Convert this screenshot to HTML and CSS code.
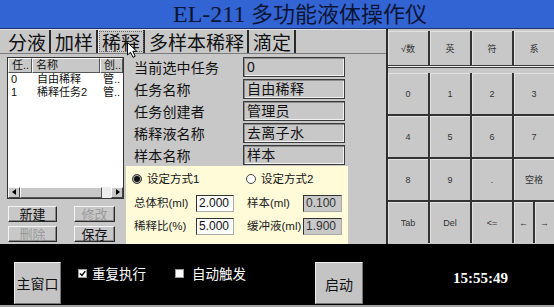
FILE: index.html
```html
<!DOCTYPE html>
<html>
<head>
<meta charset="utf-8">
<link rel="stylesheet" href="styles.css">
</head>
<body>
<div class="screen">
  <header class="title"><span class="latin">EL-211</span> 多功能液体操作仪</header>
  <div class="main">
    <section class="work">
      <nav class="tabs">
        <span class="tab first">分液</span><span class="tab">加样</span><span class="tab active">稀释</span><span class="tab">多样本稀释</span><span class="tab">滴定</span>
        <svg class="cursor" width="11" height="16" viewBox="0 0 11 16"><path d="M0.5 0.5 L0.5 13 L3.5 10.2 L6 15.3 L8.2 14.3 L5.8 9.3 L9.8 9.3 Z" fill="#fff" stroke="#000" stroke-width="1"/></svg>
      </nav>
      <div class="page">
        <div class="listcol">
          <div class="listbox">
            <div class="lhead"><span class="c1">任..</span><span class="c2">名称</span><span class="c3">创..</span></div>
            <div class="lrow"><span class="c1">0</span><span class="c2">自由稀释</span><span class="c3">管..</span></div>
            <div class="lrow"><span class="c1">1</span><span class="c2">稀释任务2</span><span class="c3">管..</span></div>
            <div class="lfill"></div>
            <div class="hscroll"><span class="arrow left"></span><span class="thumb"></span><span class="track"></span><span class="arrow right"></span></div>
          </div>
          <div class="btns">
            <span class="btn">新建</span><span class="btn off">修改</span>
            <span class="btn off">删除</span><span class="btn">保存</span>
          </div>
        </div>
        <div class="formcol">
          <div class="fields">
            <div class="frow"><span class="flabel">当前选中任务</span><span class="fbox">0</span></div>
            <div class="frow"><span class="flabel">任务名称</span><span class="fbox">自由稀释</span></div>
            <div class="frow"><span class="flabel">任务创建者</span><span class="fbox">管理员</span></div>
            <div class="frow"><span class="flabel">稀释液名称</span><span class="fbox">去离子水</span></div>
            <div class="frow"><span class="flabel">样本名称</span><span class="fbox">样本</span></div>
          </div>
          <div class="ypanel">
            <div class="yrow radios">
              <span class="radio r1"><span class="rdot on"></span>设定方式1</span>
              <span class="radio r2"><span class="rdot"></span>设定方式2</span>
            </div>
            <div class="yrow data">
              <span class="ylabel">总体积(ml)</span><span class="ibox">2.000</span>
              <span class="ylabel second">样本(ml)</span><span class="ibox ro">0.100</span>
            </div>
            <div class="yrow data gap2">
              <span class="ylabel">稀释比(%)</span><span class="ibox">5.000</span>
              <span class="ylabel second">缓冲液(ml)</span><span class="ibox ro">1.900</span>
            </div>
          </div>
        </div>
      </div>
    </section>
    <aside class="keypad">
      <div class="ktop">
        <span class="key">√数</span><span class="key">英</span><span class="key">符</span><span class="key">系</span>
      </div>
      <div class="ksep"></div>
      <div class="kgrid">
        <span class="key">0</span><span class="key">1</span><span class="key">2</span><span class="key">3</span>
        <span class="key">4</span><span class="key">5</span><span class="key">6</span><span class="key">7</span>
        <span class="key">8</span><span class="key">9</span><span class="key">.</span><span class="key">空格</span>
        <span class="key">Tab</span><span class="key">Del</span><span class="key">&lt;=</span>
        <span class="ksplit"><span class="key">←</span><span class="key">→</span></span>
      </div>
    </aside>
  </div>
  <footer class="bar">
    <span class="bigbtn home">主窗口</span>
    <span class="chk c-a"><span class="cbox"><svg width="7" height="7" viewBox="0 0 7 7"><path d="M1 3.5 L3 5.5 L6.2 1.2" fill="none" stroke="#000" stroke-width="1.4"/></svg></span>重复执行</span>
    <span class="chk c-b"><span class="cbox"></span>自动触发</span>
    <span class="bigbtn start">启动</span>
    <span class="clock">15:55:49</span>
  </footer>
</div>
</body>
</html>
```
FILE: styles.css
```css
html, body {
  margin: 0;
  padding: 0;
}
body {
  background: #c8c8c8;
  font-family: "Liberation Sans", "Noto Sans CJK SC", sans-serif;
  color: #111;
}
.screen {
  width: 554px;
  height: 307px;
  display: flex;
  flex-direction: column;
  overflow: hidden;
  background: #c8c8c8;
}
.title {
  height: 29px;
  box-sizing: border-box;
  border-bottom: 1px solid #1e3470;
  background: #3364d3;
  color: #0b1433;
  font-family: "Liberation Serif", "Noto Sans CJK SC", serif;
  font-size: 22px;
  line-height: 28px;
  padding-left: 173px;
  white-space: nowrap;
}
.title .latin {
  font-size: 24px;
}
.main {
  display: flex;
  height: 215px;
}
.work {
  width: 386px;
  display: flex;
  flex-direction: column;
}
.tabs {
  height: 24px;
  display: flex;
  position: relative;
  font-family: "Noto Sans CJK SC", sans-serif;
  font-size: 19px;
  line-height: 24px;
  border-top: 1px solid #e4e4e4;
  box-sizing: border-box;
}
.tab {
  padding: 0 3px 0 4px;
  border-right: 2px solid #2a2a2a;
  color: #111;
  white-space: nowrap;
}
.tab.first {
  padding-left: 8px;
}
.tab.active {
  outline: 1px dotted #666;
  outline-offset: -2px;
  box-shadow: inset 1px 0 0 #f2f2f2;
}
.cursor {
  position: absolute;
  left: 127px;
  top: 12px;
}
.page {
  flex: 1;
  border-top: 1px solid #7c7c7c;
  display: flex;
  padding-top: 3px;
}
.listcol {
  margin-left: 7px;
  width: 117px;
  display: flex;
  flex-direction: column;
}
.listbox {
  height: 142px;
  box-sizing: border-box;
  border: 1px solid #333;
  background: #fff;
  display: flex;
  flex-direction: column;
  font-family: "Liberation Sans", "Noto Sans CJK SC", sans-serif;
  font-size: 11px;
}
.lhead, .lrow {
  display: flex;
  white-space: nowrap;
}
.lhead {
  height: 15px;
  line-height: 13px;
}
.lhead span {
  box-sizing: border-box;
  border: 1px solid;
  border-color: #fff #555 #555 #fff;
  background: #c8c8c8;
  padding-left: 3px;
  overflow: hidden;
}
.lrow {
  height: 13px;
  line-height: 13px;
}
.lrow span {
  box-sizing: border-box;
  padding-left: 3px;
  overflow: hidden;
}
.c1 { width: 24px; }
.c2 { width: 68px; }
.c3 { width: 23px; }
.lrow .c2 { padding-left: 5px; }
.lfill {
  flex: 1;
}
.hscroll {
  height: 11px;
  display: flex;
}
.arrow {
  width: 12px;
  box-sizing: border-box;
  background: #c8c8c8;
  border: 1px solid;
  border-color: #fff #444 #444 #fff;
  position: relative;
}
.arrow::after {
  content: "";
  position: absolute;
  top: 1px;
  border-top: 3.5px solid transparent;
  border-bottom: 3.5px solid transparent;
}
.arrow.left::after {
  left: 3px;
  border-right: 4px solid #000;
}
.arrow.right::after {
  left: 4px;
  border-left: 4px solid #000;
}
.thumb {
  width: 82px;
  box-sizing: border-box;
  background: #c8c8c8;
  border: 1px solid;
  border-color: #fff #555 #555 #fff;
}
.track {
  flex: 1;
  background: #ededed;
}
.btns {
  margin-top: 7px;
  margin-left: 1px;
  display: grid;
  grid-template-columns: 49px 41px;
  grid-auto-rows: 16px;
  column-gap: 17px;
  row-gap: 4px;
}
.btn {
  box-sizing: border-box;
  border: 1px solid;
  border-color: #f4f4f4 #2a2a2a #2a2a2a #f4f4f4;
  box-shadow: inset -1px -1px 0 #888;
  font-family: "Noto Sans CJK SC", sans-serif;
  font-size: 13px;
  line-height: 14px;
  text-align: center;
  color: #111;
}
.btn.off {
  color: #9a9a9a;
}
.formcol {
  margin-left: 2px;
  width: 222px;
  display: flex;
  flex-direction: column;
}
.fields {
  display: flex;
  flex-direction: column;
  gap: 2px;
}
.frow {
  display: flex;
  height: 20px;
  align-items: center;
}
.flabel {
  width: 117px;
  box-sizing: border-box;
  padding-left: 8px;
  font-family: "Noto Sans CJK SC", sans-serif;
  font-size: 14px;
  letter-spacing: 0.2px;
  line-height: 20px;
  white-space: nowrap;
}
.fbox {
  width: 102px;
  height: 20px;
  box-sizing: border-box;
  border: 1px solid #3a3a3a;
  box-shadow: inset 1px 1px 0 #8c8c8c, inset -1px -1px 0 #f2f2f2;
  font-size: 14px;
  line-height: 18px;
  padding-left: 3px;
  letter-spacing: 0.3px;
  white-space: nowrap;
}
.ypanel {
  margin-top: 1px;
  flex: 1;
  background: #fffbd9;
  padding: 6px 0 0 6px;
  font-size: 12px;
}
.yrow {
  display: grid;
  grid-template-columns: 64px 38px 69px 39px;
  align-items: center;
  white-space: nowrap;
}
.radios {
  height: 14px;
}
.radio {
  display: flex;
  align-items: center;
  gap: 5px;
  font-size: 11.5px;
  line-height: 14px;
}
.r1 { grid-column: 1 / 3; }
.r2 { grid-column: 3 / 5; padding-left: 12px; }
.rdot {
  width: 10px;
  height: 10px;
  box-sizing: border-box;
  border-radius: 50%;
  border: 1px solid #444;
  background: #fff;
}
.rdot.on {
  background: #111;
  box-shadow: inset 0 0 0 1px #bbb;
}
.data {
  height: 17px;
  margin-top: 9px;
}
.data.gap2 {
  margin-top: 6px;
}
.ylabel {
  padding-left: 2px;
  font-size: 11.5px;
  line-height: 17px;
  color: #222;
  overflow: hidden;
}
.ylabel.second {
  padding-left: 13px;
}
.ibox {
  height: 17px;
  box-sizing: border-box;
  border: 1px solid;
  border-color: #333 #aaa #aaa #333;
  background: #fff;
  font-size: 12px;
  line-height: 15px;
  padding-left: 2px;
  color: #111;
}
.ibox.ro {
  background: #c8c8c8;
  color: #333;
}
.keypad {
  width: 166px;
  border-left: 2px solid #2e2e2e;
  display: flex;
  flex-direction: column;
}
.ktop {
  margin-top: 2px;
  height: 34px;
  display: grid;
  grid-template-columns: repeat(4, 40px);
  column-gap: 2px;
  background: #333;
}
.ksep {
  height: 8px;
  background: linear-gradient(#3a3a3a 0 1px, #efefef 1px 2px, #3a3a3a 2px 3px, #c8c8c8 3px);
}
.kgrid {
  height: 170px;
  display: grid;
  grid-template-columns: repeat(4, 40px);
  grid-template-rows: repeat(4, 41px);
  gap: 2px;
  background: #333;
}
.key {
  background: #c8c8c8;
  box-shadow: inset 1px 1px 0 #e2e2e2;
  display: flex;
  align-items: center;
  justify-content: center;
  font-family: "Liberation Sans", "Noto Sans CJK SC", sans-serif;
  font-size: 9px;
  color: #333;
}
.ksplit {
  display: flex;
  gap: 2px;
  background: #333;
}
.ksplit .key {
  flex: 1;
}
.bar {
  height: 61px;
  background: #000;
  border-bottom: 2px solid #a4a4a4;
  display: flex;
  align-items: flex-start;
}
.bigbtn {
  margin-top: 18px;
  height: 42px;
  box-sizing: border-box;
  background: #c4c4c4;
  border: 1px solid;
  border-color: #eee #777 #777 #eee;
  display: flex;
  align-items: center;
  justify-content: center;
  font-family: "Noto Sans CJK SC", sans-serif;
  font-size: 14px;
  color: #111;
}
.home {
  margin-left: 14px;
  width: 47px;
}
.start {
  width: 48px;
  padding-top: 2px;
}
.chk {
  margin-top: 22px;
  display: flex;
  align-items: center;
  gap: 5px;
  color: #fff;
  font-family: "Noto Sans CJK SC", sans-serif;
  font-size: 13.5px;
  line-height: 14px;
  white-space: nowrap;
  box-sizing: border-box;
}
.c-a {
  margin-left: 17px;
  width: 97px;
}
.c-b {
  width: 140px;
  gap: 8px;
}
.cbox {
  width: 9px;
  height: 9px;
  box-sizing: border-box;
  background: #fff;
  border: 1px solid #999;
  display: flex;
  align-items: center;
  justify-content: center;
}
.cbox svg {
  display: block;
}
.clock {
  margin-left: auto;
  margin-right: 46px;
  margin-top: 25px;
  font-family: "Liberation Serif", serif;
  font-weight: bold;
  font-size: 15px;
  line-height: 18px;
  color: #fff;
}
```
